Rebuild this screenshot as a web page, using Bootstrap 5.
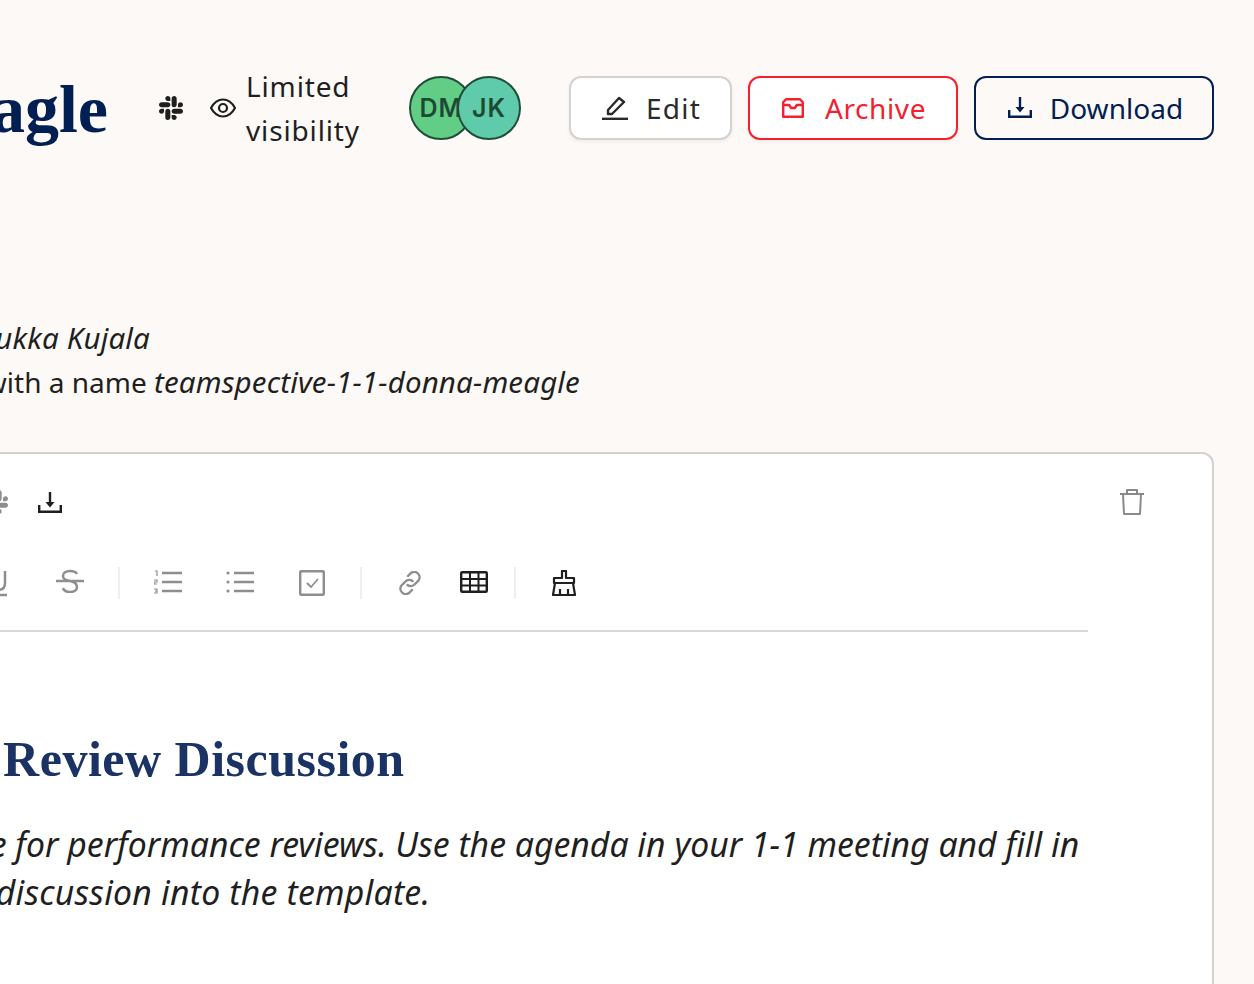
<!DOCTYPE html>
<html lang="en">
  <head>
    <meta charset="UTF-8" />
    <meta name="viewport" content="width=device-width, initial-scale=1.0" />
    <title>Donna Meagle</title>
    <link href="https://cdn.jsdelivr.net/npm/bootstrap@5.3.0/dist/css/bootstrap.min.css" rel="stylesheet" />
    <style>
      html, body { height: 100%; overflow: hidden; }
      body {
        background-color: #fdf9f6;
        color: #1f1f1f;
        font-family: "Noto Sans", sans-serif;
        font-size: 28px;
        letter-spacing: .85px;
      }
      /* page is scrolled sideways in the reference, so the sheet starts left of the window */
      .sheet { width: 1814px; margin-left: -600px; padding-top: 64px; }
      .top-row { height: 88px; }
      .page-title {
        margin: 4px 51px 0 0;
        font-family: "Liberation Serif", serif;
        font-weight: 700;
        font-size: 68px;
        letter-spacing: 0;
        color: #011f52;
        white-space: nowrap;
      }
      .eye-icon { margin: 0 10px 0 27px; }
      .vis-text { width: 115px; line-height: 44px; }
      .person {
        width: 64px; height: 64px;
        border: 2px solid #1f4d3a;
        border-radius: 50%;
        padding-top: 2px;
        color: #1e4a35;
        font-family: "Inter", sans-serif;
        font-size: 25px;
        font-weight: 600;
        letter-spacing: 1px;
      }
      .person-a { background: #62cd85; }
      .person-b { background: #5fcbab; margin-left: -16px; }
      .act-btn {
        height: 64px;
        border-width: 2px;
        border-radius: 12px;
        font-size: 28px;
        display: flex;
        align-items: center;
        justify-content: center;
        gap: 18px;
        padding: 0 0 1px;
        box-shadow: 0 2px 4px rgba(0, 0, 0, .05);
      }
      .btn-edit { width: 163px; background: #fff; border-color: #d4d2d0; color: #2a2a2a; letter-spacing: 1.200px; padding-left: 2px; }
      .btn-arch { width: 210px; background: #fff; border-color: #f5202e; color: #f5202e; letter-spacing: .6px; gap: 21px; padding-left: 2px; }
      .btn-down { width: 240px; background: transparent; border-color: #011f52; color: #011f52; box-shadow: none; letter-spacing: .05px; padding-left: 3px; }
      .meta-block { margin-top: 164px; line-height: 44px; letter-spacing: 0; }
      .meta-block em { font-size: 29.500px; letter-spacing: .15px; }
      .meta-line { white-space: nowrap; width: 1180px; text-align: right; }
      .line-one { width: 750px; }
      .sheet-card {
        margin-top: 48px;
        background: #fff;
        border: 2px solid #d4d2d0;
        border-radius: 12px;
        height: 700px;
        padding-right: 68px;
      }
      .editor-main { width: 1686px; flex: none; }
      .bin-icon { margin-left: 32px; margin-top: 35px; color: #8a8a8a; }
      .editor-head { border-bottom: 2px solid #d9d9d9; height: 178px; padding-top: 25px; }
      .tool-row { height: 46px; gap: 30px; padding-right: 1026px; }
      .tool-row-two { margin-top: 33px; height: 50px; padding-right: 510px; }
      .tool-grey { color: #8e8e8e; }
      .tool-dark { color: #1f1f1f; }
      .tool-slot { width: 28px; display: flex; justify-content: center; flex: none; }
      .tool-set { display: flex; gap: 44px; }
      .tool-set-tight { gap: 36px; }
      .divider-v { width: 2px; height: 32px; background: #efefef; margin: 0 34px; flex: none; }
      .divider-near { margin-left: 26px; }
      .editor-body { padding-left: 343px; white-space: nowrap; }
      .editor-title {
        margin: 97px 0 0 -38px;
        font-family: "Liberation Serif", serif;
        font-weight: 700;
        font-size: 50px;
        letter-spacing: .5px;
        color: #1b3364;
      }
      .intro-text { margin: 31px 0 0; font-size: 33.750px; font-style: italic; line-height: 48px; letter-spacing: 0; }
      .intro-wide { letter-spacing: .22px; }
    </style>
  </head>
  <body>
    <svg width="0" height="0" class="d-none">
      <symbol id="i-slack" viewBox="0 0 16 16"><path fill="currentColor" d="M3.362 10.11c0 .926-.756 1.681-1.681 1.681S0 11.036 0 10.111C0 9.186.756 8.43 1.68 8.43h1.682v1.68zm.846 0c0-.924.756-1.68 1.681-1.68s1.681.756 1.681 1.68v4.21c0 .924-.756 1.68-1.68 1.68a1.685 1.685 0 0 1-1.682-1.68v-4.21zM5.89 3.362c-.926 0-1.682-.756-1.682-1.681S4.964 0 5.89 0s1.68.756 1.68 1.68v1.682H5.89zm0 .846c.924 0 1.68.756 1.68 1.681S6.814 7.57 5.89 7.57H1.68C.757 7.57 0 6.814 0 5.89c0-.926.756-1.682 1.68-1.682h4.21zm6.749 1.682c0-.926.755-1.682 1.68-1.682.925 0 1.681.756 1.681 1.681s-.756 1.681-1.68 1.681h-1.681V5.89zm-.848 0c0 .924-.755 1.68-1.68 1.68A1.685 1.685 0 0 1 8.43 5.89V1.68C8.43.757 9.186 0 10.11 0c.926 0 1.681.756 1.681 1.68v4.21zm-1.681 6.748c.926 0 1.682.756 1.682 1.681S11.036 16 10.11 16s-1.681-.756-1.681-1.68v-1.682h1.68zm0-.847c-.924 0-1.68-.755-1.68-1.68 0-.925.756-1.681 1.68-1.681h4.21c.924 0 1.68.756 1.68 1.68 0 .926-.756 1.681-1.68 1.681h-4.21z"/></symbol>
      <symbol id="i-download" viewBox="0 0 24 21"><path fill="none" stroke="currentColor" stroke-width="2.400" d="M12 0v12M1.200 13v6.800h21.600V13"/><path fill="currentColor" d="M7.500 10h9L12 15.500z"/></symbol>
      <symbol id="i-eye" viewBox="0 0 26 20"><path fill="none" stroke="currentColor" stroke-width="2.200" d="M1 10c3-5.500 7-8.500 12-8.500s9 3 12 8.500c-3 5.500-7 8.500-12 8.500s-9-3-12-8.500z"/><circle cx="13" cy="10" r="4" fill="none" stroke="currentColor" stroke-width="2.200"/></symbol>
      <symbol id="i-pen" viewBox="0 0 26 24"><path fill="none" stroke="currentColor" stroke-width="2.400" stroke-linejoin="round" d="M6 14 17 2l5 4L10 18H6z"/><path fill="none" stroke="currentColor" stroke-width="2.400" d="M0 22.800h26"/></symbol>
      <symbol id="i-inbox" viewBox="0 0 22 20"><path fill="none" stroke="currentColor" stroke-width="2.400" stroke-linejoin="round" d="M4 1.200h14l2.800 3v14.600H1.200V4.200zM1.200 7h6l2 3h3.600l2-3h6"/></symbol>
      <symbol id="i-trash" viewBox="0 0 24 26"><path fill="none" stroke="currentColor" stroke-width="2" stroke-linejoin="round" d="M0 5h24M7 5V1h10v4M3 5l1 20h16l1-20"/></symbol>
      <symbol id="i-under" viewBox="0 0 24 28"><path fill="none" stroke="currentColor" stroke-width="2.500" d="M5 2v12c0 5 3 7 7 7s7-2 7-7V2M3 26h18"/></symbol>
      <symbol id="i-strike" viewBox="0 0 28 24"><path fill="none" stroke="currentColor" stroke-width="2.500" d="M21 5c-1-2-4-3-7-3-4 0-7 2-7 5s2 4 7 5 7 3 7 6-3 5-7 5c-3 0-6-1-7-4M0 12h28"/></symbol>
      <symbol id="i-ol" viewBox="0 0 28 24"><path fill="none" stroke="currentColor" stroke-width="2.500" d="M8 3h20M8 12h20M8 21h20"/><path fill="none" stroke="currentColor" stroke-width="1.200" d="M1 1h2v5M0 10h3v2H0v2h3M0 19h3v4H0M1 21h2"/></symbol>
      <symbol id="i-ul" viewBox="0 0 28 24"><path fill="none" stroke="currentColor" stroke-width="2.500" d="M8 3h20M8 12h20M8 21h20"/><circle cx="2" cy="3" r="1.600" fill="currentColor"/><circle cx="2" cy="12" r="1.600" fill="currentColor"/><circle cx="2" cy="21" r="1.600" fill="currentColor"/></symbol>
      <symbol id="i-check" viewBox="0 0 26 26"><rect x="1.200" y="1.200" width="23.600" height="23.600" rx="1" fill="none" stroke="currentColor" stroke-width="2.400"/><path fill="none" stroke="currentColor" stroke-width="1.800" d="m8 13 4 4 7-8"/></symbol>
      <symbol id="i-link" viewBox="0 0 24 24"><path fill="none" stroke="currentColor" stroke-width="2.400" stroke-linecap="round" d="M10 5l3-3c2-1.500 5-1.500 7 .5s2 5 .5 7l-4 4c-2 2-5 2-7 .5M14 19l-3 3c-2 1.500-5 1.500-7-.5s-2-5-.5-7l4-4c2-2 5-2 7-.5"/></symbol>
      <symbol id="i-table" viewBox="0 0 28 22"><rect x="1.200" y="1.200" width="25.600" height="19.600" rx="1" fill="none" stroke="currentColor" stroke-width="2.400"/><path fill="none" stroke="currentColor" stroke-width="2" d="M1 8h26M1 14.500h26M10 1v20M18.500 1v20"/></symbol>
      <symbol id="i-broom" viewBox="0 0 24 26"><path fill="none" stroke="currentColor" stroke-width="2.200" stroke-linejoin="round" d="M10 1h4v7h8v5H2V8h8zM3 13 1 25h22l-2-12M8 25v-6M16 25v-6"/></symbol>
    </svg>

    <div class="sheet">
      <div class="top-row d-flex align-items-center justify-content-end">
        <h1 class="page-title">Donna Meagle</h1>
        <svg class="tool-dark" width="24" height="24"><use href="#i-slack"/></svg>
        <svg class="eye-icon" width="26" height="20"><use href="#i-eye"/></svg>
        <div class="vis-text">Limited visibility</div>
        <div class="d-flex ms-5 me-5">
          <div class="person person-a d-flex align-items-center justify-content-center">DM</div>
          <div class="person person-b d-flex align-items-center justify-content-center">JK</div>
        </div>
        <div class="d-flex gap-3">
          <button class="btn act-btn btn-edit"><svg width="26" height="24"><use href="#i-pen"/></svg>Edit</button>
          <button class="btn act-btn btn-arch"><svg width="22" height="20"><use href="#i-inbox"/></svg>Archive</button>
          <button class="btn act-btn btn-down"><svg width="24" height="21"><use href="#i-download"/></svg>Download</button>
        </div>
      </div>

      <div class="meta-block">
        <div class="meta-line line-one"><em>Jukka Kujala</em></div>
        <div class="meta-line">Slack channel with a name <em>teamspective-1-1-donna-meagle</em></div>
      </div>

      <div class="sheet-card d-flex">
        <div class="editor-main">
          <div class="editor-head">
            <div class="tool-row d-flex justify-content-end align-items-center">
              <svg class="tool-grey" width="24" height="24"><use href="#i-slack"/></svg>
              <svg class="tool-dark" width="24" height="21"><use href="#i-download"/></svg>
            </div>
            <div class="tool-row tool-row-two d-flex justify-content-end align-items-center gap-0">
              <div class="tool-set tool-grey">
                <span class="tool-slot"><svg width="24" height="28"><use href="#i-under"/></svg></span>
                <span class="tool-slot"><svg width="28" height="24"><use href="#i-strike"/></svg></span>
              </div>
              <div class="divider-v"></div>
              <div class="tool-set tool-grey">
                <span class="tool-slot"><svg width="28" height="24"><use href="#i-ol"/></svg></span>
                <span class="tool-slot"><svg width="28" height="24"><use href="#i-ul"/></svg></span>
                <span class="tool-slot"><svg width="26" height="26"><use href="#i-check"/></svg></span>
              </div>
              <div class="divider-v"></div>
              <div class="tool-set tool-set-tight">
                <span class="tool-slot tool-grey"><svg width="24" height="24"><use href="#i-link"/></svg></span>
                <span class="tool-slot tool-dark"><svg width="28" height="22"><use href="#i-table"/></svg></span>
              </div>
              <div class="divider-v divider-near"></div>
              <span class="tool-slot tool-dark"><svg width="24" height="26"><use href="#i-broom"/></svg></span>
            </div>
          </div>
          <div class="editor-body">
            <h2 class="editor-title">Performance Review Discussion</h2>
            <p class="intro-text">This is a template for performance reviews. Use the agenda in your 1-1 meeting and fill in<br /><span class="intro-wide">notes from your discussion into the template.</span></p>
          </div>
        </div>
        <svg class="bin-icon" width="24" height="26"><use href="#i-trash"/></svg>
      </div>
    </div>
  </body>
</html>
